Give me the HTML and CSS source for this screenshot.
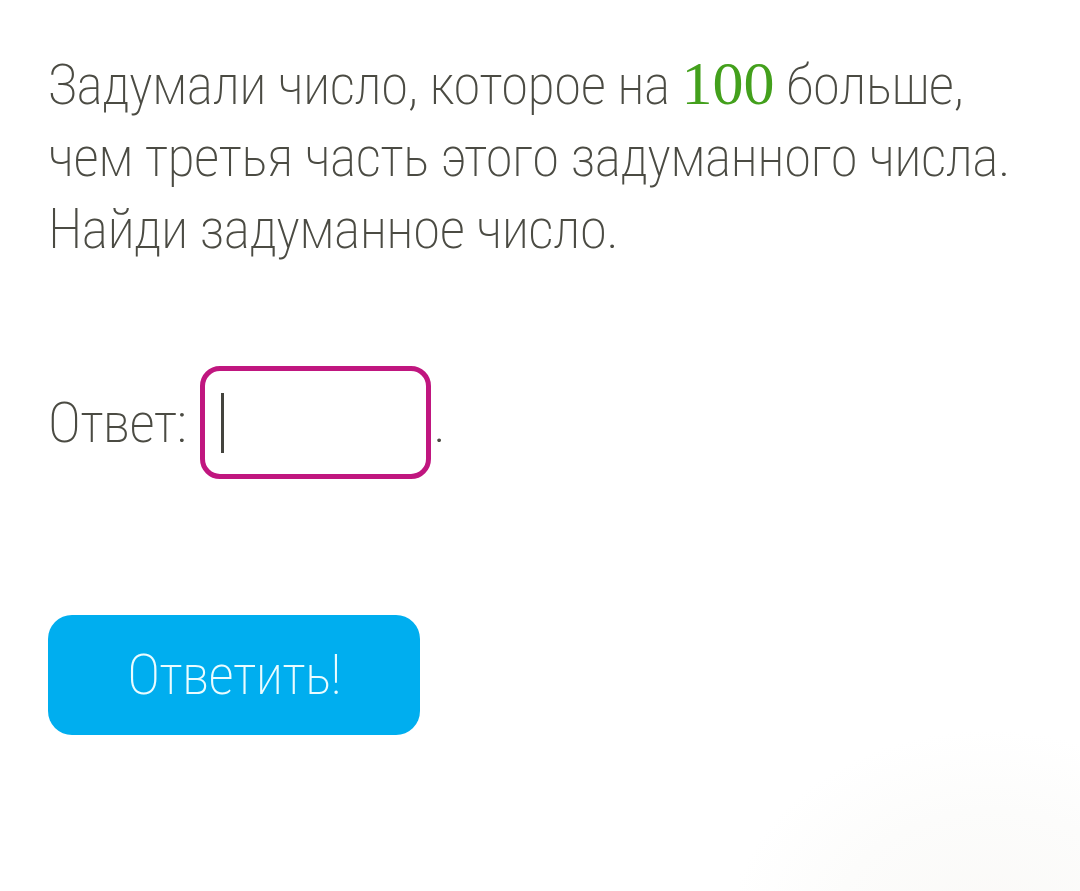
FILE: index.html
```html
<!DOCTYPE html>
<html lang="ru">
<head>
<meta charset="utf-8">
<link rel="stylesheet" href="styles.css">
</head>
<body>
<main class="task">
  <p class="question">Задумали число, которое на <span class="num">100</span> больше, чем третья часть этого задуманного числа. Найди задуманное число.</p>
  <div class="answer-row">
    <span class="label">Ответ:</span>
    <span class="input"><span class="caret"></span></span>
    <span class="dot">.</span>
  </div>
  <button class="submit">Ответить!</button>
</main>
</body>
</html>
```
FILE: styles.css
```css
html, body {
  margin: 0;
  padding: 0;
  background: #ffffff;
}
body {
  width: 1080px;
  height: 891px;
  overflow: hidden;
  background: radial-gradient(ellipse 260px 200px at 990px 930px, #faf9f7 0%, #fcfcfb 60%, #ffffff 100%);
  font-family: "Roboto", "Liberation Sans", sans-serif;
  font-weight: 200;
  font-stretch: 75%;
  color: #4b4b43;
}
.task {
  padding: 49px 0 0 48px;
}
.question {
  margin: 0;
  width: 1000px;
  font-size: 56px;
  line-height: 72px;
  letter-spacing: -0.65px;
}
.num {
  font-family: "Liberation Serif", "DejaVu Serif", serif;
  font-weight: 400;
  font-stretch: 100%;
  letter-spacing: 0;
  color: #43a01c;
  font-size: 62px;
  line-height: 1;
}
.answer-row {
  display: flex;
  align-items: center;
  margin-top: 101px;
  font-size: 56px;
  letter-spacing: -0.7px;
}
.input {
  display: flex;
  align-items: center;
  width: 231px;
  height: 113px;
  margin-left: 14px;
  border: 5px solid #c0167f;
  border-radius: 20px;
  box-sizing: border-box;
  padding-left: 16px;
}
.caret {
  width: 3px;
  height: 60px;
  background: #44443e;
}
.dot {
  margin-left: 2px;
}
.submit {
  display: block;
  margin-top: 136px;
  width: 372px;
  height: 120px;
  border: 0;
  border-radius: 24px;
  background: #00aeef;
  color: #eafcff;
  font-family: "Roboto", "Liberation Sans", sans-serif;
  font-weight: 200;
  font-stretch: 75%;
  font-size: 56px;
  letter-spacing: -0.7px;
}
```
